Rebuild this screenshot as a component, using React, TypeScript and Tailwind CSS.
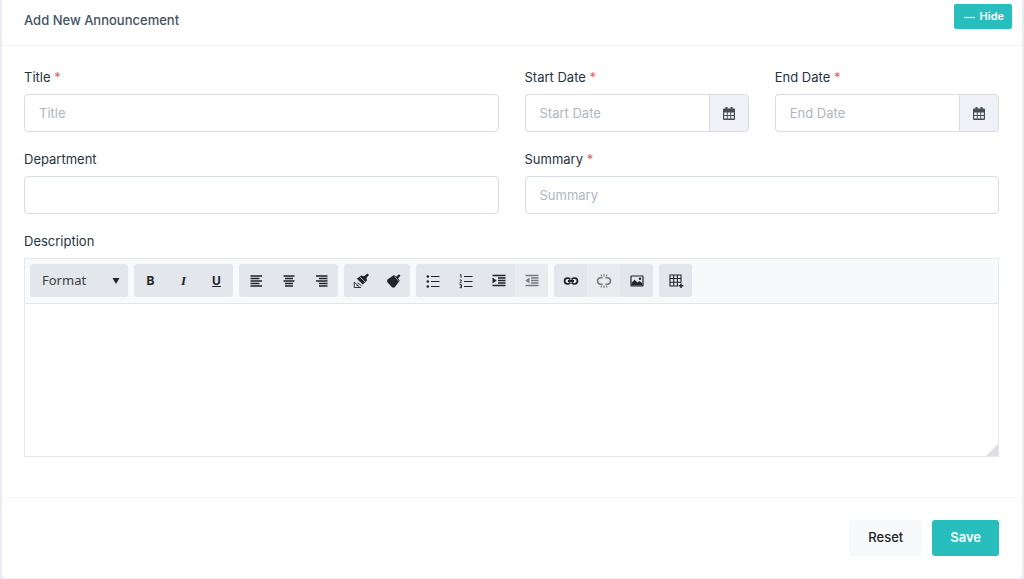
import React from "react";

interface IconProps {
  children: React.ReactNode;
  size?: number;
}

// Every toolbar glyph is drawn on a 16 unit grid
const Icon: React.FC<IconProps> = ({ children, size = 16 }) => (
  <svg
    width={size}
    height={size}
    viewBox="0 0 16 16"
    fill="none"
    stroke="currentColor"
    aria-hidden="true"
  >
    {children}
  </svg>
);

const CalendarIcon = () => (
  <svg width="12" height="13" viewBox="0 0 12 13" aria-hidden="true">
    <path
      fill="currentColor"
      fillRule="evenodd"
      d="M2.5 0h2v1.500h3V0h2v1.500H11a1 1 0 0 1 1 1V12a1 1 0 0 1-1 1H1a1 1 0 0 1-1-1V2.500a1 1 0 0 1 1-1h1.500zM1.200 5.400V8h2.600V5.400zM4.700 5.400V8h2.600V5.400zM8.200 5.400V8h2.600V5.400zM1.200 9v2.600h2.600V9zM4.700 9v2.600h2.600V9zM8.200 9v2.600h2.600V9z"
    />
  </svg>
);

const AlignLeftIcon = () => (
  <Icon>
    <path d="M2.500 3h11.500M2.500 5.500h9M2.500 8h11.500M2.500 10.500h9M2.500 13h11.500" strokeWidth="1.300" />
  </Icon>
);

const AlignCenterIcon = () => (
  <Icon>
    <path d="M2.500 3h11M4 5.500h8M2.500 8h11M4 10.500h8M4 13h8" strokeWidth="1.300" />
  </Icon>
);

const AlignRightIcon = () => (
  <Icon>
    <path d="M2 3h11.500M5 5.500h8.500M2 8h11.500M5 10.500h8.500M5 13h8.500" strokeWidth="1.300" />
  </Icon>
);

const CopyFormatIcon = () => (
  <Icon>
    <path
      d="M14.500.6 16 2.100l-2.600 2.900.6 2.500-4.200 4.100-6-5.900 4.400-3.300 2.800.8z"
      fill="currentColor"
      stroke="none"
    />
    <path d="m6.800 3.600 5.700 5.700" stroke="#e3e6eb" strokeWidth=".7" />
    <path d="M1.200 9v5.500H8M1.200 9l5 5M4.500 9.600l4 3.200" strokeWidth=".9" />
    <path d="M3.600 12.400h1.600" strokeWidth="1.200" />
  </Icon>
);

const PasteFormatIcon = () => (
  <Icon>
    <path
      d="m13 1.200 1.500 1.500-2.500 2.700 1.800 2-5.200 7.200H6.200L1.200 9V6.700l6.800-4.800 2.200 1.800z"
      fill="currentColor"
      stroke="none"
    />
    <path d="m8.500 3.500 4.500 4.800" stroke="#e3e6eb" strokeWidth=".6" />
  </Icon>
);

const BulletListIcon = () => (
  <Icon>
    <path d="M6 3.500h8.500M6 8.500h8.500M6 13.500h8.500" strokeWidth="1.200" />
    <g fill="currentColor" stroke="none">
      <circle cx="2.800" cy="3.500" r="1.300" />
      <circle cx="2.800" cy="8.500" r="1.300" />
      <circle cx="2.800" cy="13.500" r="1.300" />
    </g>
  </Icon>
);

const NumberListIcon = () => (
  <Icon>
    <path d="M6 3.500h8.500M6 8.500h8.500M6 13.500h8.500" strokeWidth="1.200" />
    <path
      d="M1.800 2.200 3 1.600v3.200M1.600 7h1.800v1.200L1.700 9.800h2M1.600 11.700h1.900v3H1.600M2.100 13.200h1.400"
      strokeWidth=".9"
    />
  </Icon>
);

const IndentIcon = () => (
  <Icon>
    <path d="M1.500 2.500h13M7 5h7.500M7 7.500h7.500M7 10h7.500M1.500 12.500h13" strokeWidth="1.300" />
    <path d="M1.500 4.500 5.700 7.500l-4.200 3z" fill="currentColor" stroke="none" />
  </Icon>
);

const OutdentIcon = () => (
  <Icon>
    <path d="M1.500 2.500h13M7 5h7.500M7 7.500h7.500M7 10h7.500M1.500 12.500h13" strokeWidth="1.300" />
    <path d="M5.500 4.500 1.300 7.500l4.200 3z" fill="currentColor" stroke="none" />
  </Icon>
);

const LinkIcon = () => (
  <Icon>
    <path
      d="M7.300 6.400A2.600 2.600 0 0 0 5 5.200h-.6a2.800 2.800 0 0 0 0 5.600H5a2.600 2.600 0 0 0 2.300-1.200M8.700 6.400A2.600 2.600 0 0 1 11 5.200h.6a2.800 2.800 0 0 1 0 5.600H11a2.600 2.600 0 0 1-2.300-1.200M5 8h6"
      strokeWidth="1.800"
    />
  </Icon>
);

const UnlinkIcon = () => (
  <Icon>
    <path
      d="M6.500 4.700H4.800a3.300 3.300 0 0 0 0 6.600h1.700M9.500 4.700h1.700a3.300 3.300 0 0 1 0 6.600H9.500"
      strokeWidth="1.600"
    />
    <path
      d="M8 1v2.500M4.800 1.500l1.200 2M11.200 1.500l-1.200 2M8 12.500V15M4.800 14.500l1.200-2M11.200 14.500l-1.200-2"
      strokeWidth="1.100"
    />
  </Icon>
);

const ImageIcon = () => (
  <Icon>
    <rect x="2" y="3" width="12" height="10" rx=".5" strokeWidth="1.200" />
    <path
      d="M2.500 12.600V10l3-3.300 3 2.900 2-1.500 3 2.500v2z"
      fill="currentColor"
      stroke="none"
    />
    <circle cx="11" cy="5.800" r="1.200" fill="currentColor" stroke="none" />
  </Icon>
);

const TableIcon = () => (
  <Icon>
    <path
      d="M13 9.500V2H2v11h8M2 5.500h11M2 9.300h11M5.700 2v11M9.400 2v11"
      strokeWidth="1.100"
    />
    <path d="M13 10.500V15M10.700 12.700h4.600" strokeWidth="1.500" />
  </Icon>
);

interface Tool {
  label: string;
  icon: React.ReactNode;
  disabled?: boolean;
}

const toolGroups: Tool[][] = [
  [
    { label: "Bold", icon: <span className="text-xs font-bold">B</span> },
    {
      label: "Italic",
      icon: (
        <span className="font-['Liberation_Serif',serif] text-[13px] font-bold italic">
          I
        </span>
      ),
    },
    {
      label: "Underline",
      icon: <span className="text-xs font-bold underline">U</span>,
    },
  ],
  [
    { label: "Align left", icon: <AlignLeftIcon /> },
    { label: "Center", icon: <AlignCenterIcon /> },
    { label: "Align right", icon: <AlignRightIcon /> },
  ],
  [
    { label: "Copy formatting", icon: <CopyFormatIcon /> },
    { label: "Paste formatting", icon: <PasteFormatIcon /> },
  ],
  [
    { label: "Bulleted list", icon: <BulletListIcon /> },
    { label: "Numbered list", icon: <NumberListIcon /> },
    { label: "Indent", icon: <IndentIcon /> },
    { label: "Outdent", icon: <OutdentIcon />, disabled: true },
  ],
  [
    { label: "Link", icon: <LinkIcon /> },
    { label: "Unlink", icon: <UnlinkIcon />, disabled: true },
    { label: "Image", icon: <ImageIcon /> },
  ],
  [{ label: "Table", icon: <TableIcon /> }],
];

interface FieldProps {
  id: string;
  label: string;
  required?: boolean;
  children: React.ReactNode;
}

const Field: React.FC<FieldProps> = ({ id, label, required, children }) => (
  <div className="min-w-0">
    <label htmlFor={id} className="mb-[7px] block leading-5">
      {label}
      {required && <span className="text-[#f25961]"> *</span>}
    </label>
    {children}
  </div>
);

const inputClass =
  "h-[38px] w-full min-w-0 border border-[#d8dce3] bg-white px-3.5 placeholder:text-[#b0b6c0] outline-none focus:border-[#28bebd]";

const DateField: React.FC<{ id: string; label: string }> = ({ id, label }) => (
  <Field id={id} label={label} required>
    <div className="flex">
      <input
        id={id}
        type="text"
        placeholder={label}
        className={`${inputClass} rounded-l border-r-0`}
      />
      <button
        type="button"
        aria-label={`Pick ${label}`}
        className="flex h-[38px] w-10 shrink-0 items-center justify-center rounded-r border border-[#d8dce3] bg-[#eff1f7] text-[#464d55]"
      >
        <CalendarIcon />
      </button>
    </div>
  </Field>
);

const Editor: React.FC = () => (
  <div className="border border-[#e6e8ed]">
    <div className="flex flex-wrap gap-1.5 border-b border-[#e2e5ea] bg-[#f8f9fb] px-[5px] pt-[5px] pb-1.5">
      <div className="relative">
        <select
          aria-label="Format"
          className="h-[33px] w-[98px] appearance-none rounded-[3px] bg-[#e3e6eb] pl-3 font-['Noto_Sans',sans-serif] text-[13px] text-[#3a3f45]"
        >
          <option>Format</option>
          <option>Heading 1</option>
          <option>Heading 2</option>
        </select>
        <svg
          className="pointer-events-none absolute top-3.5 right-2"
          width="8"
          height="6"
          viewBox="0 0 8 6"
          aria-hidden="true"
        >
          <path d="M.5 0h7L4 6z" fill="#212529" />
        </svg>
      </div>
      {toolGroups.map((group, i) => (
        <div key={i} className="flex overflow-hidden rounded-[3px] bg-[#e3e6eb]">
          {group.map((tool) => (
            <button
              key={tool.label}
              type="button"
              aria-label={tool.label}
              disabled={tool.disabled}
              className="flex h-[33px] w-[33px] items-center justify-center text-[#212529] disabled:bg-[#eaebef] disabled:text-[#777b80]"
            >
              {tool.icon}
            </button>
          ))}
        </div>
      ))}
    </div>
    <div className="relative">
      <textarea
        id="description"
        className="block h-[152px] w-full resize-none bg-white p-3 outline-none"
      />
      <svg
        className="pointer-events-none absolute right-0 bottom-0"
        width="12"
        height="12"
        viewBox="0 0 12 12"
        aria-hidden="true"
      >
        <path d="M12 0v12H0z" fill="#dcdfe4" />
      </svg>
    </div>
  </div>
);

export default function App() {
  return (
    <div className="bg-[#ebebf2] px-0.5 pb-px font-['Inter',sans-serif] text-[13px] text-[#293240]">
      <form className="rounded-b bg-white">
        <div className="flex h-[46px] items-start justify-between border-b border-[#f1f2f4] pr-2.5 pl-[22px]">
          <h5 className="pt-2.5 leading-5 font-medium text-[#445263]">
            Add New Announcement
          </h5>
          <button
            type="button"
            className="mt-1 flex h-[25px] items-center gap-1 rounded-xs bg-[#28bebd] px-2 text-[11px] font-semibold text-white"
          >
            <svg width="14" height="10" viewBox="0 0 14 10" aria-hidden="true">
              <path d="M2 5.500h11" stroke="currentColor" strokeWidth="1.200" />
            </svg>
            Hide
          </button>
        </div>

        <div className="pt-[21px] pr-[23px] pb-10 pl-[22px]">
          <div className="grid grid-cols-2 gap-x-[26px] gap-y-[17px]">
            <Field id="title" label="Title" required>
              <input
                id="title"
                type="text"
                placeholder="Title"
                className={`${inputClass} rounded`}
              />
            </Field>
            <div className="grid grid-cols-2 gap-[26px]">
              <DateField id="start-date" label="Start Date" />
              <DateField id="end-date" label="End Date" />
            </div>
            <Field id="department" label="Department">
              <select id="department" className={`${inputClass} appearance-none rounded`} />
            </Field>
            <Field id="summary" label="Summary" required>
              <input
                id="summary"
                type="text"
                placeholder="Summary"
                className={`${inputClass} rounded`}
              />
            </Field>
          </div>
          <div className="mt-[17px]">
            <Field id="description" label="Description">
              <Editor />
            </Field>
          </div>
        </div>

        <div className="flex justify-end gap-2.5 border-t border-[#f4f5f7] px-[23px] py-[22px] font-medium">
          <button
            type="reset"
            className="h-9 rounded-[3px] bg-[#f8f9fb] px-[19px] text-[#212529]"
          >
            Reset
          </button>
          <button
            type="button"
            className="h-9 rounded-[3px] bg-[#28bebd] px-[18px] font-semibold text-white"
          >
            Save
          </button>
        </div>
      </form>
    </div>
  );
}
